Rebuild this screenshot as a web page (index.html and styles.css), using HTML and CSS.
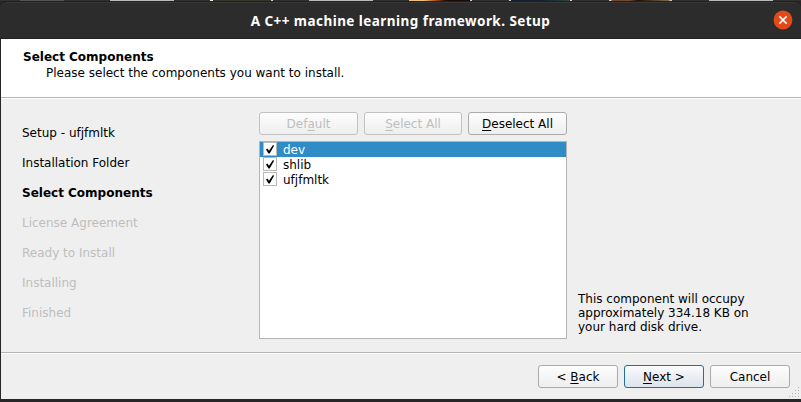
FILE: index.html
```html
<!DOCTYPE html>
<html lang="en">
<head>
<meta charset="utf-8">
<title>A C++ machine learning framework. Setup</title>
<link rel="stylesheet" href="styles.css">
</head>
<body>
<div class="desktop"></div>
<div class="window">
  <header class="titlebar">
    <h1>A C++ machine learning framework. Setup</h1>
    <svg class="close" width="20" height="20" viewBox="0 0 20 20"><circle cx="10" cy="10" r="9.4" fill="#e24a19"/><path d="M6.4 6.4l7.2 7.2M13.6 6.4l-7.2 7.2" stroke="#fff" stroke-width="1.5"/></svg>
  </header>
  <section class="intro">
    <h2>Select Components</h2>
    <p>Please select the components you want to install.</p>
  </section>
  <main class="content">
    <nav class="steps">
      <span>Setup - ufjfmltk</span>
      <span>Installation Folder</span>
      <span class="current">Select Components</span>
      <span class="pending">License Agreement</span>
      <span class="pending">Ready to Install</span>
      <span class="pending">Installing</span>
      <span class="pending">Finished</span>
    </nav>
    <section class="picker">
      <div class="actions">
        <button class="btn" disabled>Def<u>a</u>ult</button>
        <button class="btn" disabled><u>S</u>elect All</button>
        <button class="btn"><u>D</u>eselect All</button>
      </div>
      <div class="list">
        <div class="row selected"><svg class="check" viewBox="1 1 12 12"><path d="M3 7.4l1.4-.8 1.6 2.2L9.8 3.2l1.4.2L6.7 11.4H5.5z"/></svg><span>dev</span></div>
        <div class="row"><svg class="check" viewBox="1 1 12 12"><path d="M3 7.4l1.4-.8 1.6 2.2L9.8 3.2l1.4.2L6.7 11.4H5.5z"/></svg><span>shlib</span></div>
        <div class="row"><svg class="check" viewBox="1 1 12 12"><path d="M3 7.4l1.4-.8 1.6 2.2L9.8 3.2l1.4.2L6.7 11.4H5.5z"/></svg><span>ufjfmltk</span></div>
      </div>
    </section>
    <p class="size">This component will occupy<br>approximately 334.18 KB on<br>your hard disk drive.</p>
  </main>
  <footer class="footer">
    <button class="btn">&lt; <u>B</u>ack</button>
    <button class="btn primary"><u>N</u>ext &gt;</button>
    <button class="btn">Cancel</button>
    <svg class="grip" width="10" height="10" viewBox="0 0 10 10"><path d="M9 0h1v1h-1zM6 3h1v1h-1zM9 3h1v1h-1zM3 6h1v1h-1zM6 6h1v1h-1zM9 6h1v1h-1zM0 9h1v1h-1zM3 9h1v1h-1zM6 9h1v1h-1zM9 9h1v1h-1z"/></svg>
  </footer>
</div>
</body>
</html>
```
FILE: styles.css
```css
* { box-sizing: border-box; }
body {
  margin: 0;
  width: 801px;
  height: 402px;
  overflow: hidden;
  background: #272526;
  color: #000;
  font: 12px/14px "DejaVu Sans", sans-serif;
}
h1, h2, p { margin: 0; }
.desktop {
  height: 1px;
  background: linear-gradient(90deg,
    #303030 20px, #555 20px 64px, #303030 64px 110px, #b9bcba 110px 174px,
    #303030 174px 210px, #eee 210px 213px, #35362a 213px 271px, #ccc 271px 273px,
    #303030 273px 309px, #b9bcba 309px 373px, #303030 373px 409px,
    #eec07a 409px 424px, #a84c18 436px, #1a0a08 446px 470px, #ccc 470px 472px,
    #303030 472px 509px, #ccc 509px 511px, #172231 511px 540px, #294734 570px,
    #ccc 570px 572px, #303030 572px 609px, #ccc 609px 611px, #75492b 612px 630px,
    #1d1008 638px, #80704c 669px, #ccc 670px 672px, #303030 672px 709px,
    #b9bcba 709px 773px, #303030 773px);
}
.window {
  display: flex;
  flex-direction: column;
  height: 398px;
  padding-left: 1px;
}
.titlebar {
  display: grid;
  grid-template-columns: 1fr auto 1fr;
  align-items: center;
  height: 38px;
  margin-left: -1px;
  background: #2c2c2c;
  border-top: 1px solid #202020;
  border-bottom: 1px solid #231f20;
  border-radius: 7px 7px 0 0;
  box-shadow: inset 0 1px #383838;
}
.titlebar h1 {
  grid-column: 2;
  padding-top: 1px;
  color: #fff;
  font: bold 13.5px/20px "Noto Sans", sans-serif;
  letter-spacing: 0.45px;
  white-space: nowrap;
}
.close {
  justify-self: end;
  margin: 0 8px 1px 0;
}
.intro {
  height: 59px;
  padding: 11px 22px 0;
  background: #fff;
  border-bottom: 1px solid #b4b4b4;
}
.intro h2 { font-size: 12px; line-height: 14px; }
.intro p { margin: 2px 0 0 23px; }
.content {
  display: flex;
  height: 254px;
  padding: 0 10px 13px 21px;
  background: #efefef;
  border-top: 1px solid #fff;
}
.steps {
  width: 237px;
  padding-top: 19px;
  line-height: 30px;
}
.steps span { display: block; }
.current { font-weight: bold; }
.pending { color: #bebebe; }
.picker {
  width: 308px;
  padding-top: 13px;
}
.actions {
  display: grid;
  grid-template-columns: 99px 98px 99px;
  justify-content: space-between;
}
.btn {
  height: 23px;
  padding: 1px 0 0;
  border: 1px solid #ababab;
  border-radius: 3px;
  background: linear-gradient(#fdfdfd, #eee);
  color: #000;
  font: inherit;
  white-space: nowrap;
}
.btn:disabled { color: #bebebe; border-color: #c2c2c2; }
.btn u {
  text-decoration-thickness: 1px;
  text-underline-offset: 2px;
  text-decoration-skip-ink: none;
}
.list {
  height: 198px;
  margin-top: 6px;
  border: 1px solid #b4b4b4;
  background: #fff;
}
.row {
  display: flex;
  gap: 6px;
  height: 15px;
  padding-left: 3px;
  line-height: 15px;
}
.row span { padding-top: 1px; }
.selected { background: #308cc6; color: #fff; }
.check {
  width: 14px;
  height: 14px;
  border: 1px solid #b8b8b8;
  background: #fff;
}
.size {
  align-self: flex-end;
  margin: 0 0 5px 11px;
  white-space: nowrap;
}
.footer {
  position: relative;
  display: flex;
  justify-content: flex-end;
  gap: 6px;
  height: 47px;
  padding: 12px 11px 0 0;
  background: #efefef;
  border-top: 1px solid #b4b4b4;
  box-shadow: inset 0 1px #fff;
}
.footer .btn { width: 80px; }
.footer .primary {
  border-color: #256e9c;
  background: linear-gradient(#fafbfc, #dce3ea);
}
.grip {
  position: absolute;
  right: 2px;
  bottom: 2px;
  fill: #b4b4b4;
}
```
